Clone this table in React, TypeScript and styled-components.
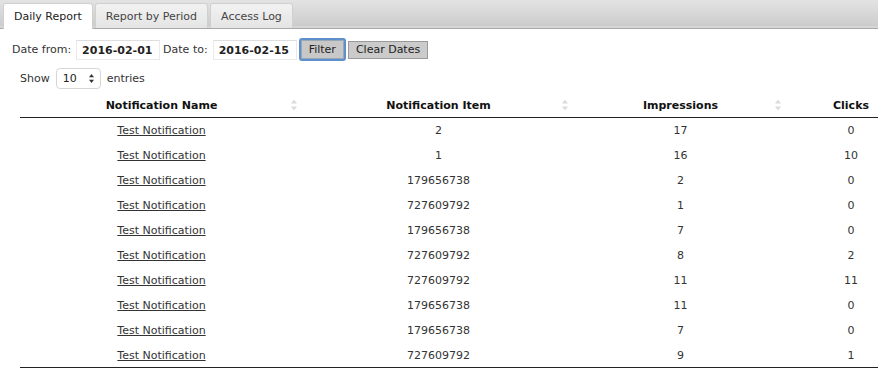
import React from 'react';
import styled, { createGlobalStyle } from 'styled-components';

const rows = [
  { item: '2', impressions: 17, clicks: 0 },
  { item: '1', impressions: 16, clicks: 10 },
  { item: '179656738', impressions: 2, clicks: 0 },
  { item: '727609792', impressions: 1, clicks: 0 },
  { item: '179656738', impressions: 7, clicks: 0 },
  { item: '727609792', impressions: 8, clicks: 2 },
  { item: '727609792', impressions: 11, clicks: 11 },
  { item: '179656738', impressions: 11, clicks: 0 },
  { item: '179656738', impressions: 7, clicks: 0 },
  { item: '727609792', impressions: 9, clicks: 1 },
];

const columns = [
  { title: 'Notification Name', width: 283 },
  { title: 'Notification Item', width: 271 },
  { title: 'Impressions', width: 213 },
  { title: 'Clicks', width: 128 },
];

const SortIcon = () => (
  <svg width="6" height="11" viewBox="0 0 6 11">
    <path d="M3 0 L6 4 L0 4 Z" fill="#dcdcdc" />
    <path d="M3 11 L6 7 L0 7 Z" fill="#dcdcdc" />
  </svg>
);

const SelectArrows = () => (
  <svg width="5" height="9" viewBox="0 0 5 9">
    <path d="M2.5 0 L5 3.2 L0 3.2 Z" fill="#333" />
    <path d="M2.5 9 L5 5.8 L0 5.8 Z" fill="#333" />
  </svg>
);

const App = () => {
  return (
    <>
      <GlobalStyle />
      <TabBar>
        <Tab $active>Daily Report</Tab>
        <Tab>Report by Period</Tab>
        <Tab>Access Log</Tab>
      </TabBar>
      <Panel>
        <FilterRow>
          <Label>Date from:</Label>
          <DateInput>2016-02-01</DateInput>
          <Label>Date to:</Label>
          <DateInput>2016-02-15</DateInput>
          <FilterButton>Filter</FilterButton>
          <ClearButton>Clear Dates</ClearButton>
        </FilterRow>
        <TableWrapper>
          <LengthRow>
            <span>Show</span>
            <LengthSelect>
              <span>10</span>
              <SelectArrows />
            </LengthSelect>
            <span>entries</span>
          </LengthRow>
          <Table>
            <colgroup>
              {columns.map((c) => (
                <col key={c.title} style={{ width: c.width }} />
              ))}
            </colgroup>
            <thead>
              <tr>
                {columns.map((c) => (
                  <HeadCell key={c.title}>
                    {c.title}
                    <SortSlot>
                      <SortIcon />
                    </SortSlot>
                  </HeadCell>
                ))}
              </tr>
            </thead>
            <tbody>
              {rows.map((r, i) => (
                <tr key={i}>
                  <Cell>
                    <NameLink href="#">Test Notification</NameLink>
                  </Cell>
                  <Cell>{r.item}</Cell>
                  <Cell>{r.impressions}</Cell>
                  <Cell>{r.clicks}</Cell>
                </tr>
              ))}
            </tbody>
          </Table>
        </TableWrapper>
      </Panel>
    </>
  );
};

const GlobalStyle = createGlobalStyle`
  html, body {
    margin: 0;
    overflow: hidden;
    background: #fff;
  }
  body {
    font-family: "DejaVu Sans", Verdana, sans-serif;
    font-size: 11px;
    color: #333;
  }
`;

const TabBar = styled.div`
  display: flex;
  align-items: flex-end;
  gap: 2px;
  height: 28px;
  padding: 0 3px;
  background: linear-gradient(#e3e3e3, #cacaca);
  border-bottom: 1px solid #a8a8a8;
  box-shadow: inset 0 -2px 0 #d6d6d6;
`;

const Tab = styled.div<{ $active?: boolean }>`
  height: ${(p) => (p.$active ? '26px' : '25px')};
  margin-bottom: ${(p) => (p.$active ? '-1px' : '0')};
  line-height: 25px;
  padding: 0 10px;
  box-sizing: border-box;
  border: 1px solid #d0d0d0;
  border-bottom: 0;
  border-radius: 3px 3px 0 0;
  background: ${(p) => (p.$active ? '#fff' : 'linear-gradient(#f2f2f2, #e4e4e4)')};
  color: ${(p) => (p.$active ? '#222' : '#444')};
`;

const Panel = styled.div`
  padding: 9px 0 0 12px;
`;

const FilterRow = styled.div`
  display: flex;
  align-items: center;
  height: 23px;
`;

const Label = styled.span`
  margin-right: 5px;
  white-space: nowrap;
`;

const DateInput = styled.div`
  width: 84px;
  height: 20px;
  box-sizing: border-box;
  padding: 0 5px;
  line-height: 19px;
  border: 1px solid #eaeaea;
  border-top-color: #dedede;
  font-weight: bold;
  white-space: nowrap;
  overflow: hidden;
  color: #222;
  margin-right: 3px;
`;

const FilterButton = styled.div`
  height: 23px;
  box-sizing: border-box;
  padding: 0 8px;
  line-height: 20px;
  margin-left: -1px;
  border: 2px solid #5d8fcc;
  border-radius: 3px;
  box-shadow: inset 0 0 0 1px #9aa7b5;
  background: #c8c8c8;
  color: #222;
`;

const ClearButton = styled.div`
  height: 18px;
  box-sizing: border-box;
  padding: 0 7px;
  line-height: 16px;
  margin-left: 2px;
  border: 1px solid #9a9a9a;
  background: #cbcbcb;
  color: #222;
`;

const TableWrapper = styled.div`
  padding-left: 8px;
`;

const LengthRow = styled.div`
  display: flex;
  align-items: center;
  gap: 6px;
  margin-top: 7px;
  height: 21px;
`;

const LengthSelect = styled.div`
  display: flex;
  align-items: center;
  justify-content: space-between;
  width: 45px;
  height: 21px;
  box-sizing: border-box;
  padding: 0 6px 0 6px;
  border: 1px solid #d6d6d6;
  border-radius: 4px;
  background: #fff;
  color: #222;
`;

const Table = styled.table`
  margin-top: 4px;
  width: 895px;
  border-collapse: collapse;
  table-layout: fixed;
  border-bottom: 1px solid #222;
`;

const HeadCell = styled.th`
  position: relative;
  height: 24px;
  padding: 0;
  text-align: center;
  font-weight: bold;
  color: #111;
  border-bottom: 1px solid #222;
`;

const SortSlot = styled.span`
  position: absolute;
  right: 6px;
  top: 50%;
  transform: translateY(-50%);
  display: flex;
`;

const Cell = styled.td`
  height: 25px;
  padding: 1px 0 0;
  box-sizing: border-box;
  text-align: center;
  color: #333;
`;

const NameLink = styled.a`
  color: #333;
  text-decoration: underline;
`;

export default App;
